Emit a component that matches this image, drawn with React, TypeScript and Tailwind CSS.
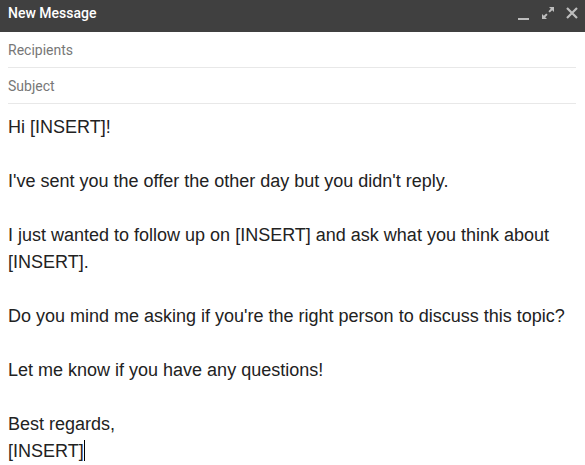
export default function App() {
  const paragraphs = [
    ['Hi [INSERT]!'],
    ["I've sent you the offer the other day but you didn't reply."],
    ['I just wanted to follow up on [INSERT] and ask what you think about [INSERT].'],
    ["Do you mind me asking if you're the right person to discuss this topic?"],
    ['Let me know if you have any questions!'],
  ];

  return (
    <div className="w-[585px] h-[465px] bg-white overflow-hidden">
      {/* Header */}
      <div className="h-[32px] bg-[#404040] flex items-center justify-between pl-2 pr-[7px]">
        <span className="text-white text-[14px] font-medium font-['Roboto',sans-serif] -mt-[6px]">New Message</span>
        <div className="flex items-center gap-[12px] text-[#bdbdbd] -mt-[6px]">
          <svg width="12" height="14" viewBox="0 0 12 14">
            <rect x="0" y="12" width="11" height="2" fill="currentColor" />
          </svg>
          <svg width="12" height="12" viewBox="0 0 12 12" fill="currentColor">
            <path d="M7 0h5v5l-1.8-1.8-2.4 2.4-1.4-1.4 2.4-2.4z" />
            <path d="M5 12H0V7l1.8 1.8 2.4-2.4 1.4 1.4-2.4 2.4z" />
          </svg>
          <svg width="12" height="12" viewBox="0 0 12 12">
            <path d="M1 1l10 10M11 1L1 11" stroke="currentColor" strokeWidth="2.2" />
          </svg>
        </div>
      </div>

      {/* Fields */}
      <div className="px-2 pr-[9px] font-['Roboto',sans-serif] text-[14px] text-[#777]">
        <div className="h-[36px] flex items-center pt-[2px] border-b border-[#e8e8e8]">Recipients</div>
        <div className="h-[36px] flex items-center pt-[2px] border-b border-[#e8e8e8]">Subject</div>
      </div>

      {/* Body */}
      <div className="px-2 pt-[10px] font-['Liberation_Sans',Arial,sans-serif] text-[18px] leading-[27px] text-[#222]">
        {paragraphs.map((p, i) => (
          <p key={i} className="mb-[27px]">{p[0]}</p>
        ))}
        <p>Best regards,</p>
        <p>
          [INSERT]<span className="inline-block w-px h-[21px] bg-black align-[-4px]" />
        </p>
      </div>
    </div>
  );
}
